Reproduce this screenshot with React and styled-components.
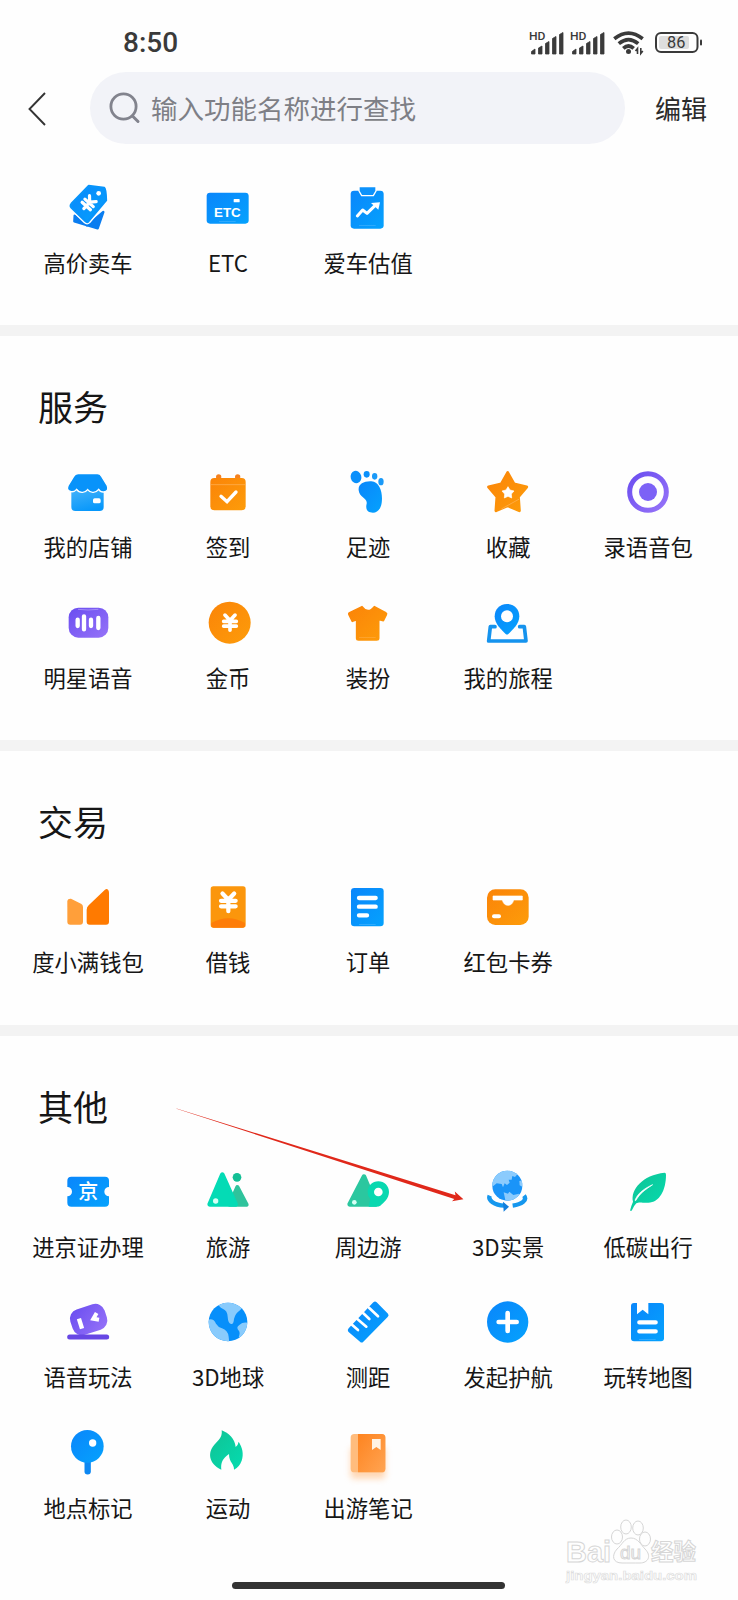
import styled, { createGlobalStyle } from "styled-components";

const GlobalStyle = createGlobalStyle`
  * {
    box-sizing: border-box;
  }

  body {
    margin: 0;
    background-color: #fefefe;
    color: #161616;
    font-family: "Noto Sans CJK SC", "Noto Sans", sans-serif;
  }
`;

const IconText = styled.text`
  fill: #fff;
  font-family: ${(props) =>
    props.$cjk
      ? '"Noto Sans CJK SC", sans-serif'
      : '"Liberation Sans", sans-serif'};
  font-weight: ${(props) => (props.$cjk ? 500 : 700)};
`;

const Gradients = () => (
  <HiddenSvg>
    <defs>
      <linearGradient id="blue" x1="0" y1="0" x2="1" y2="1">
        <stop offset="0" stopColor="#0a86fb" />
        <stop offset="1" stopColor="#05a2fd" />
      </linearGradient>
      <linearGradient id="sky" x1="0.2" y1="0" x2="0.6" y2="1">
        <stop offset="0" stopColor="#3fb0fa" />
        <stop offset="1" stopColor="#0697fb" />
      </linearGradient>
      <linearGradient id="orange" x1="0" y1="0" x2="1" y2="1">
        <stop offset="0" stopColor="#fb8408" />
        <stop offset="1" stopColor="#fd9c0a" />
      </linearGradient>
      <linearGradient id="purple" x1="0" y1="0" x2="1" y2="1">
        <stop offset="0" stopColor="#6a4df0" />
        <stop offset="1" stopColor="#9673f8" />
      </linearGradient>
      <linearGradient id="green" x1="0" y1="0" x2="1" y2="1">
        <stop offset="0" stopColor="#10c294" />
        <stop offset="1" stopColor="#04dcb0" />
      </linearGradient>
      <linearGradient id="amber" x1="0" y1="0" x2="1" y2="1">
        <stop offset="0" stopColor="#fe8420" />
        <stop offset="1" stopColor="#ffa452" />
      </linearGradient>
      <filter id="soft" x="-50%" y="-50%" width="200%" height="200%">
        <feGaussianBlur stdDeviation="9" />
      </filter>
      <clipPath id="globeClip">
        <circle cx="73" cy="56" r="45" />
      </clipPath>
      <clipPath id="earthClip">
        <circle cx="75" cy="75" r="58" />
      </clipPath>
    </defs>
  </HiddenSvg>
);

const Yen = ({ x, y, scale = 1, rotate = 0 }) => (
  <path
    transform={`translate(${x} ${y}) rotate(${rotate}) scale(${scale})`}
    d="M-16 -24 L0 -7 L16 -24 M0 -7 V24 M-20 -4 H20 M-20 11 H20"
    fill="none"
    stroke="#fff"
    strokeWidth="11.5"
    strokeLinecap="round"
    strokeLinejoin="round"
  />
);

const Shine = ({ y, color = "#7cc8ff" }) => (
  <path d={`M48 ${y} H98`} stroke={color} strokeWidth="2" opacity="0.6" />
);

// Every icon is drawn on a 150 x 150 canvas
const icons = {
  sellCar: (
    <>
      <path
        d="M35 98 L72 128 L121 87 L104 136 L34 115 Z"
        fill="#0a7df0"
        stroke="#0a7df0"
        strokeWidth="7"
        strokeLinejoin="round"
      />
      <path
        d="M77 9 L124 15 Q128 17 129 52 L76 115 Q72 119 67 114 L25 73 Q21 68 26 62 Z"
        fill="url(#blue)"
        stroke="#fff"
        strokeWidth="15"
        strokeLinejoin="round"
      />
      <path
        d="M77 9 L124 15 Q128 17 129 52 L76 115 Q72 119 67 114 L25 73 Q21 68 26 62 Z"
        fill="url(#blue)"
        stroke="#0894fb"
        strokeWidth="7"
        strokeLinejoin="round"
      />
      <circle cx="107" cy="31" r="7" fill="#fff" />
      <Yen x={76} y={62} scale={0.84} rotate={42} />
    </>
  ),
  etc: (
    <>
      <rect x="11" y="29" width="126" height="93" rx="10" fill="url(#blue)" />
      <rect x="92" y="48" width="18" height="10" rx="2" fill="#fff" />
      <IconText x="33" y="103" textLength="80" lengthAdjust="spacingAndGlyphs" fontSize="39">
        ETC
      </IconText>
      <Shine y={116} />
    </>
  ),
  carValue: (
    <>
      <rect x="23" y="23" width="99" height="114" rx="10" fill="url(#blue)" />
      <path
        d="M48 11 H99 V24 L91 38 H56 L48 24 Z"
        fill="#0d92fb"
        stroke="#fff"
        strokeWidth="4"
        strokeLinejoin="round"
      />
      <path
        d="M43 99 L59 81 L72 91 L99 65"
        fill="none"
        stroke="#fff"
        strokeWidth="9"
        strokeLinecap="round"
        strokeLinejoin="round"
      />
      <path d="M84 60 L111 58 L106 80 Z" fill="#fff" />
      <Shine y={127} />
    </>
  ),
  shop: (
    <>
      <path d="M25 68 H122 V120 Q122 132 110 132 H37 Q25 132 25 120 Z" fill="url(#sky)" />
      <path
        d="M46 20 H103 Q112 20 116 28 L133 56 Q139 73 122 75 Q112 76 107 67 Q99 77 89 76 Q80 76 74 68 Q67 77 57 76 Q47 76 41 67 Q33 76 24 74 Q9 71 15 56 L32 28 Q37 20 46 20 Z"
        fill="#0893fa"
        stroke="#fff"
        strokeWidth="4"
      />
      <rect x="90" y="94" width="23" height="15" rx="5" fill="#fff" />
    </>
  ),
  checkIn: (
    <>
      <circle cx="47" cy="30" r="8" fill="#f58220" />
      <circle cx="104" cy="30" r="8" fill="#f58220" />
      <rect x="22" y="33" width="106" height="97" rx="12" fill="url(#orange)" />
      <path d="M24 53 H126" stroke="#ffb45c" strokeWidth="2" />
      <path
        d="M54 88 L72 104 L99 75"
        fill="none"
        stroke="#fff"
        strokeWidth="10"
        strokeLinecap="round"
      />
    </>
  ),
  footprint: (
    <>
      <ellipse cx="39" cy="30" rx="16" ry="19" transform="rotate(-15 39 30)" fill="#0a90fb" />
      <ellipse cx="71" cy="22" rx="9" ry="10" fill="#0a90fb" />
      <ellipse cx="95" cy="28" rx="8" ry="10" fill="#1a9af8" />
      <ellipse cx="114" cy="44" rx="8" ry="11" fill="#1a9af8" />
      <path
        d="M47 70 C45 51 62 42 85 43 C112 45 120 80 116 108 C113 128 102 137 90 137 C72 137 67 125 71 110 C74 93 49 92 47 70 Z"
        fill="url(#blue)"
      />
    </>
  ),
  favorite: (
    <>
      <path
        d="M74 17 L93 51 L131 60 L106 89 L109 131 L74 116 L39 131 L42 89 L17 60 L55 51 Z"
        fill="url(#orange)"
        stroke="url(#orange)"
        strokeWidth="9"
        strokeLinejoin="round"
      />
      <path
        d="M75 59 L81 69 L93 72 L85 81 L86 93 L75 88 L64 93 L65 81 L57 72 L69 69 Z"
        fill="#fff"
        stroke="#fff"
        strokeWidth="2"
        strokeLinejoin="round"
      />
      <path d="M55 126 L109 96" stroke="#ffb55e" strokeWidth="2" />
    </>
  ),
  record: (
    <>
      <circle cx="75" cy="75" r="55" fill="none" stroke="url(#purple)" strokeWidth="15" />
      <circle cx="75" cy="75" r="27" fill="#7c62f6" />
    </>
  ),
  starVoice: (
    <>
      <rect x="17" y="29" width="119" height="90" rx="29" fill="url(#purple)" />
      <path
        d="M44 65 V84 M63 55 V94 M84 65 V84 M106 60 V90"
        stroke="#fff"
        strokeWidth="13"
        strokeLinecap="round"
      />
      <path d="M45 34 Q75 38 106 34" fill="none" stroke="#b9a7fb" strokeWidth="2" />
    </>
  ),
  coin: (
    <>
      <circle cx="80" cy="74" r="63" fill="url(#orange)" />
      <Yen x={81} y={74} scale={0.95} />
    </>
  ),
  dress: (
    <>
      <path
        d="M57 26 Q75 50 94 26 L128 44 Q132 46 130 50 L121 68 L107 64 V121 Q107 126 101 126 H47 Q41 126 41 121 V65 L28 70 L18 50 Q16 46 20 44 Z"
        fill="url(#orange)"
        stroke="url(#orange)"
        strokeWidth="5"
        strokeLinejoin="round"
      />
      <Shine y={118} color="#ffc070" />
    </>
  ),
  trip: (
    <>
      <path
        d="M72 18 C95 18 109 35 109 55 C109 77 90 95 76 108 Q72 111 68 108 C54 95 35 77 35 55 C35 35 49 18 72 18 Z"
        fill="url(#blue)"
      />
      <circle cx="72" cy="55" r="18" fill="#fff" />
      <path
        d="M36 86 H22 L17 129 H129 L124 86 H110"
        fill="none"
        stroke="#1593ee"
        strokeWidth="11"
        strokeLinecap="round"
        strokeLinejoin="round"
      />
    </>
  ),
  wallet: (
    <>
      <path
        d="M24 50 L54 65 Q60 68 60 75 V119 Q60 128 51 128 H22 Q13 128 13 119 V57 Q14 49 24 50 Z"
        fill="#ff9f3a"
      />
      <path
        d="M77 70 L125 24 Q131 19 135 23 Q138 26 138 32 V119 Q138 128 129 128 H80 Q71 128 71 119 V83 Q71 75 77 70 Z"
        fill="#ff7a00"
      />
    </>
  ),
  loan: (
    <>
      <rect x="23" y="13" width="105" height="124" rx="8" fill="#fb960c" />
      <path d="M25 123 Q76 94 126 123 V129 Q126 137 118 137 H33 Q25 137 25 129 Z" fill="#fe7d08" />
      <Yen x={76} y={61} scale={1.1} />
    </>
  ),
  order: (
    <>
      <rect x="24" y="18" width="98" height="115" rx="10" fill="url(#blue)" />
      <path
        d="M48 48 H98 M48 74 H98 M48 100 H72"
        stroke="#fff"
        strokeWidth="13"
        strokeLinecap="round"
      />
      <Shine y={128} />
    </>
  ),
  coupon: (
    <>
      <rect x="12" y="22" width="125" height="107" rx="25" fill="url(#orange)" />
      <path
        d="M30 42 H118 V54 H92 Q88 70 75 70 Q62 70 58 54 H30 Z"
        fill="#fff"
        stroke="#fff"
        strokeWidth="2"
        strokeLinejoin="round"
      />
      <path d="M33 103 H48" stroke="#fff" strokeWidth="12" strokeLinecap="round" />
    </>
  ),
  permit: (
    <>
      <path
        d="M25 29 H126 Q138 29 138 41 V60 A14 14 0 0 0 138 88 V107 Q138 119 126 119 H25 Q13 119 13 107 V88 A14 14 0 0 0 13 60 V41 Q13 29 25 29 Z"
        fill="url(#blue)"
      />
      <IconText x="46" y="97" fontSize="60" $cjk>
        京
      </IconText>
    </>
  ),
  travel: (
    <>
      <path
        d="M103 60 L131 113 H80 Z"
        fill="#2fc39c"
        stroke="#2fc39c"
        strokeWidth="12"
        strokeLinejoin="round"
      />
      <path
        d="M58 23 L98 112 H20 Z"
        fill="#04dbb5"
        stroke="#04dbb5"
        strokeWidth="14"
        strokeLinejoin="round"
      />
      <circle cx="102" cy="31" r="13" fill="#13bf95" />
      <circle cx="38" cy="102" r="8" fill="#d6fff5" />
    </>
  ),
  nearby: (
    <>
      <path
        d="M63 29 L98 112 H20 Z"
        fill="#2bc79f"
        stroke="#2bc79f"
        strokeWidth="14"
        strokeLinejoin="round"
      />
      <path
        d="M106 43 C124 43 138 57 138 75 C138 94 122 108 112 116 Q108 119 100 119 H77 L82 96 Q74 88 74 75 C74 57 88 43 106 43 Z"
        fill="#09d8b0"
      />
      <circle cx="106" cy="75" r="13" fill="#fff" />
      <circle cx="34" cy="106" r="7" fill="#d6fff5" />
    </>
  ),
  scene: (
    <>
      <circle cx="73" cy="56" r="45" fill="#1a94f8" />
      <g clipPath="url(#globeClip)" fill="#8bcbfd">
        <path d="M22 55 L30 20 L72 5 L104 21 L96 30 L88 27 L86 38 L77 38 L80 47 L72 54 L65 49 L60 61 L56 51 L41 49 L31 57 Z" />
        <path d="M62 76 L75 80 L79 74 L91 84 L108 80 L106 100 L68 104 Z" />
        <path d="M109 42 L120 40 L119 60 L110 55 Z" />
      </g>
      <path
        d="M20 86 C14 100 34 114 64 116 M123 86 C134 100 116 112 89 116"
        fill="none"
        stroke="#1597ee"
        strokeWidth="13"
      />
      <path d="M60 104 L78 119 L62 134 Z" fill="#127fdd" />
    </>
  ),
  lowCarbon: (
    <>
      <path
        d="M125 17 Q129 17 129 23 C129 70 109 106 76 107 C58 108 48 104 40 109 Q32 117 26 131 L21 131 Q25 115 30 104 C22 68 58 24 125 17 Z"
        fill="url(#green)"
      />
      <path
        d="M36 100 C43 82 58 67 89 53 C65 69 51 79 38 101 Z"
        fill="#fff"
        stroke="#fff"
        strokeWidth="2"
      />
    </>
  ),
  voicePlay: (
    <>
      <rect
        x="23"
        y="28"
        width="108"
        height="80"
        rx="29"
        fill="url(#purple)"
        transform="rotate(-18 76 68)"
      />
      <rect x="46" y="64" width="13" height="32" fill="#fff" transform="rotate(-17 52 80)" />
      <path d="M101 48 L91 65 L108 68" fill="none" stroke="#fff" strokeWidth="12" />
      <path d="M20 120 H131" stroke="#6747e4" strokeWidth="15" strokeLinecap="round" />
    </>
  ),
  earth: (
    <>
      <circle cx="75" cy="75" r="58" fill="#078ffa" />
      <g clipPath="url(#earthClip)" fill="#89cbfc">
        <path d="M46 18 Q47 31 59 35 Q73 40 74 59 Q75 78 84 81 Q92 83 93 66 Q97 49 111 40 L122 28 L98 10 H55 Z" />
        <path d="M15 68 Q32 63 39 80 Q46 91 57 94 Q74 99 77 119 L79 139 H35 L8 107 Z" />
        <path d="M138 78 Q119 74 110 83 Q97 91 108 102 Q112 108 107 121 L123 124 Z" />
      </g>
    </>
  ),
  measure: (
    <>
      <path
        d="M17 94 L91 16 Q96 11 101 16 L135 50 Q139 55 134 60 L61 134 Q56 139 51 134 L16 104 Q12 99 17 94 Z"
        fill="url(#blue)"
      />
      <path
        d="M27 83 L45 99 M43 66 L70 89 M61 49 L79 66 M78 32 L105 58"
        stroke="#fff"
        strokeWidth="8"
        strokeLinecap="round"
      />
    </>
  ),
  escort: (
    <>
      <circle cx="74" cy="75" r="62" fill="url(#blue)" />
      <path d="M74 48 V102 M47 75 H101" stroke="#fff" strokeWidth="14" strokeLinecap="round" />
    </>
  ),
  mapGuide: (
    <>
      <rect x="24" y="18" width="99" height="115" rx="9" fill="url(#blue)" />
      <path d="M42 16 V52 L59 38 L76 52 V16 Z" fill="#fff" />
      <path d="M49 76 H98 M49 103 H98" stroke="#fff" strokeWidth="13" strokeLinecap="round" />
      <Shine y={128} />
    </>
  ),
  placeMark: (
    <>
      <path d="M74 92 V130" stroke="#0c87f2" strokeWidth="19" strokeLinecap="round" />
      <circle cx="73" cy="55" r="49" fill="url(#blue)" />
      <circle cx="89" cy="45" r="11" fill="#fff" />
    </>
  ),
  sport: (
    <path
      d="M56 7 C77 15 96 32 98 57 Q105 52 107 41 C118 58 123 77 116 98 Q109 117 93 125 C94 107 78 104 78 78 C58 92 53 105 55 125 C17 108 11 72 38 46 C52 32 58 23 56 7 Z"
      fill="url(#green)"
    />
  ),
  notes: (
    <>
      <rect
        x="23"
        y="58"
        width="104"
        height="94"
        rx="10"
        fill="#ffc28d"
        opacity="0.65"
        filter="url(#soft)"
      />
      <rect x="23" y="18" width="104" height="115" rx="11" fill="#ffbc7d" />
      <path d="M45 18 H116 Q127 18 127 29 V122 Q127 133 116 133 H45 Z" fill="url(#amber)" />
      <path d="M87 33 H113 V66 L100 57 L87 66 Z" fill="#fff3e4" />
    </>
  ),
};

const sections = [
  {
    items: [
      ["高价卖车", "sellCar"],
      ["ETC", "etc"],
      ["爱车估值", "carValue"],
    ],
  },
  {
    title: "服务",
    items: [
      ["我的店铺", "shop"],
      ["签到", "checkIn"],
      ["足迹", "footprint"],
      ["收藏", "favorite"],
      ["录语音包", "record"],
      ["明星语音", "starVoice"],
      ["金币", "coin"],
      ["装扮", "dress"],
      ["我的旅程", "trip"],
    ],
  },
  {
    title: "交易",
    items: [
      ["度小满钱包", "wallet"],
      ["借钱", "loan"],
      ["订单", "order"],
      ["红包卡券", "coupon"],
    ],
  },
  {
    title: "其他",
    items: [
      ["进京证办理", "permit"],
      ["旅游", "travel"],
      ["周边游", "nearby"],
      ["3D实景", "scene"],
      ["低碳出行", "lowCarbon"],
      ["语音玩法", "voicePlay"],
      ["3D地球", "earth"],
      ["测距", "measure"],
      ["发起护航", "escort"],
      ["玩转地图", "mapGuide"],
      ["地点标记", "placeMark"],
      ["运动", "sport"],
      ["出游笔记", "notes"],
    ],
  },
];

const Signal = () => (
  <svg width="36" height="26" viewBox="0 0 36 26">
    <StatusText x="0" y="9.8" fontSize="11" textLength="16.5" lengthAdjust="spacingAndGlyphs">
      HD
    </StatusText>
    <path
      d="M2.5 24 V21.5 L6 19 V24 Z M9.5 24 V18 L13 16 V24 Z M16.5 24 V13.5 L20 11.5 V24 Z M23.5 24 V8.5 L27 6.5 V24 Z M30.5 24 V4.5 L34 2.5 V24 Z"
      fill="#3a3a3a"
      stroke="#3a3a3a"
      strokeWidth="0.8"
      strokeLinejoin="round"
    />
  </svg>
);

const StatusIcons = () => (
  <StatusGroup>
    <Signal />
    <Signal />
    <svg width="32" height="26" viewBox="0 0 32 26">
      <path
        d="M1.3 8.8 Q15.5 -2.5 29.7 8.8 M5.8 13.6 Q15.5 5.5 25.2 13.6 M10.3 18.3 Q15.5 13.6 20.7 18.3"
        fill="none"
        stroke="#3a3a3a"
        strokeWidth="3.7"
      />
      <circle cx="15.5" cy="21.6" r="2.5" fill="#3a3a3a" />
      <path
        d="M24.5 24 V18.5 L22.5 21 M27.8 18 V23.5 L29.8 21"
        fill="none"
        stroke="#3a3a3a"
        strokeWidth="1.6"
      />
    </svg>
    <svg width="48" height="26" viewBox="0 0 48 26">
      <rect x="1" y="3" width="41.5" height="19" rx="5" fill="none" stroke="#3a3a3a" strokeWidth="2" />
      <rect x="4" y="6" width="30" height="13" rx="2" fill="#dedede" />
      <rect x="45" y="9.5" width="2" height="6" rx="1" fill="#3a3a3a" />
      <StatusText x="12" y="18.3" fontSize="16.3" $thin>
        86
      </StatusText>
    </svg>
  </StatusGroup>
);

const Watermark = () => (
  <WatermarkSvg width="140" height="70" viewBox="0 0 140 70">
    <g fill="#fefefe" stroke="#d6d6d6" strokeWidth="1">
      <OutlineText x="1" y="45.5" fontSize="30" textLength="45" lengthAdjust="spacingAndGlyphs">
        Bai
      </OutlineText>
      <ellipse cx="52" cy="21" rx="5.5" ry="7" />
      <ellipse cx="61" cy="11" rx="5.3" ry="7" />
      <ellipse cx="73" cy="12" rx="5.3" ry="7" />
      <ellipse cx="80" cy="23" rx="5.5" ry="7" />
      <path d="M66 22 C73 22 76 29 80 33 C87 40 83 47 75 47 C70 47 62 47 57 47 C48 47 46 40 52 33 C57 29 59 22 66 22 Z" />
      <OutlineText x="55" y="43" fontSize="19" textLength="21" $light>
        du
      </OutlineText>
      <OutlineText x="86" y="44" fontSize="22.5" $cjk>
        经验
      </OutlineText>
    </g>
    <OutlineText
      x="1"
      y="64"
      fontSize="13.2"
      textLength="131"
      lengthAdjust="spacingAndGlyphs"
      fill="#fefefe"
      stroke="#dedede"
      strokeWidth="0.7"
    >
      jingyan.baidu.com
    </OutlineText>
  </WatermarkSvg>
);

const Feature = ({ label, icon }) => (
  <FeatureItem>
    <FeatureIcon width="50" height="50" viewBox="0 0 150 150">
      {icons[icon]}
    </FeatureIcon>
    <FeatureLabel>{label}</FeatureLabel>
  </FeatureItem>
);

const App = () => {
  return (
    <Page>
      <GlobalStyle />
      <Gradients />
      <StatusBar>
        <Clock>8:50</Clock>
        <StatusIcons />
      </StatusBar>
      <Header>
        <BackButton aria-label="返回">
          <svg width="18" height="34" viewBox="0 0 18 34">
            <path d="M17 1 L1.5 17 L17 33" fill="none" stroke="#333" strokeWidth="1.9" />
          </svg>
        </BackButton>
        <SearchBox>
          <svg width="32" height="32" viewBox="0 0 32 32">
            <circle cx="14.5" cy="14.5" r="12.6" fill="none" stroke="#82838d" strokeWidth="2.8" />
            <path d="M23.5 24 L29 29.5" stroke="#82838d" strokeWidth="3" strokeLinecap="round" />
          </svg>
          <Placeholder>输入功能名称进行查找</Placeholder>
        </SearchBox>
        <EditButton>编辑</EditButton>
      </Header>
      {sections.map((section, index) => (
        <Section key={index} $untitled={!section.title}>
          {section.title && <SectionTitle>{section.title}</SectionTitle>}
          <Grid>
            {section.items.map(([label, icon]) => (
              <Feature key={icon} label={label} icon={icon} />
            ))}
          </Grid>
        </Section>
      ))}
      <ArrowSvg width="290" height="100" viewBox="0 0 290 100">
        <path
          d="M0.5 4.5 L279.5 91.2 L278.8 87.6 L287.4 95.3 L276 97.3 L278.3 95 L0.5 4.8 Z"
          fill="#e0281a"
        />
      </ArrowSvg>
      <Watermark />
      <HomeIndicator />
    </Page>
  );
};

const Page = styled.main`
  position: relative;
  width: 738px;
  height: 1600px;
  overflow: hidden;
  background-color: #fefefe;
`;

const HiddenSvg = styled.svg`
  position: absolute;
  width: 0;
  height: 0;
`;

const StatusText = styled.text`
  fill: #3a3a3a;
  font-family: Roboto, sans-serif;
  font-weight: ${(props) => (props.$thin ? 400 : 500)};
`;

const OutlineText = styled.text`
  font-family: ${(props) =>
    props.$cjk
      ? '"Noto Sans CJK SC", sans-serif'
      : '"Liberation Sans", sans-serif'};
  font-weight: ${(props) => (props.$light ? 400 : 700)};
`;

const StatusBar = styled.div`
  display: flex;
  justify-content: space-between;
  height: 72px;
  padding: 30px 35px 0 123px;
`;

const Clock = styled.div`
  color: #3a3a3a;
  font-family: Roboto, sans-serif;
  font-size: 28px;
  font-weight: 500;
  line-height: 26px;
`;

const StatusGroup = styled.div`
  display: flex;
  height: 26px;

  svg {
    margin-right: 5px;
  }

  svg:nth-child(3) {
    margin: 0 10px 0 2px;
  }

  svg:last-child {
    margin: 0;
  }
`;

const Header = styled.header`
  display: flex;
  align-items: center;
  height: 72px;
  padding-left: 28px;
`;

const BackButton = styled.button`
  width: 62px;
  padding: 2px 0 0;
  border: 0;
  background: none;
  text-align: left;

  svg {
    display: block;
  }
`;

const SearchBox = styled.div`
  display: flex;
  align-items: center;
  gap: 10px;
  width: 535px;
  height: 72px;
  padding-left: 19px;
  border-radius: 36px;
  background-color: #f2f3f8;
`;

const Placeholder = styled.span`
  color: #7e7f86;
  font-size: 26.5px;
  line-height: 40px;
`;

const EditButton = styled.button`
  margin-left: 30px;
  padding: 0;
  border: 0;
  background: none;
  color: #2b2b2b;
  font-family: inherit;
  font-size: 26px;
  line-height: 40px;
`;

const Section = styled.section`
  padding: ${(props) => (props.$untitled ? "38.5px" : "45px")} 19.8px 48.5px 18px;

  & + & {
    border-top: 11px solid #f3f3f3;
  }
`;

const SectionTitle = styled.h2`
  margin: 0 0 36px 20px;
  font-size: 35px;
  font-weight: 400;
  line-height: 50px;
`;

const Grid = styled.div`
  display: grid;
  grid-template-columns: repeat(5, 1fr);
  row-gap: 36.5px;
`;

const FeatureItem = styled.div`
  display: flex;
  flex-direction: column;
  align-items: center;
  gap: 14px;
`;

const FeatureIcon = styled.svg`
  overflow: visible;
`;

const FeatureLabel = styled.span`
  font-size: 22.3px;
  line-height: 30px;
  white-space: nowrap;
`;

const ArrowSvg = styled.svg`
  position: absolute;
  left: 176px;
  top: 1104px;
`;

const WatermarkSvg = styled.svg`
  position: absolute;
  left: 565px;
  top: 1516px;
`;

const HomeIndicator = styled.div`
  position: absolute;
  left: 232px;
  bottom: 11px;
  width: 273px;
  height: 7px;
  border-radius: 4px;
  background-color: #333;
`;

export default App;
